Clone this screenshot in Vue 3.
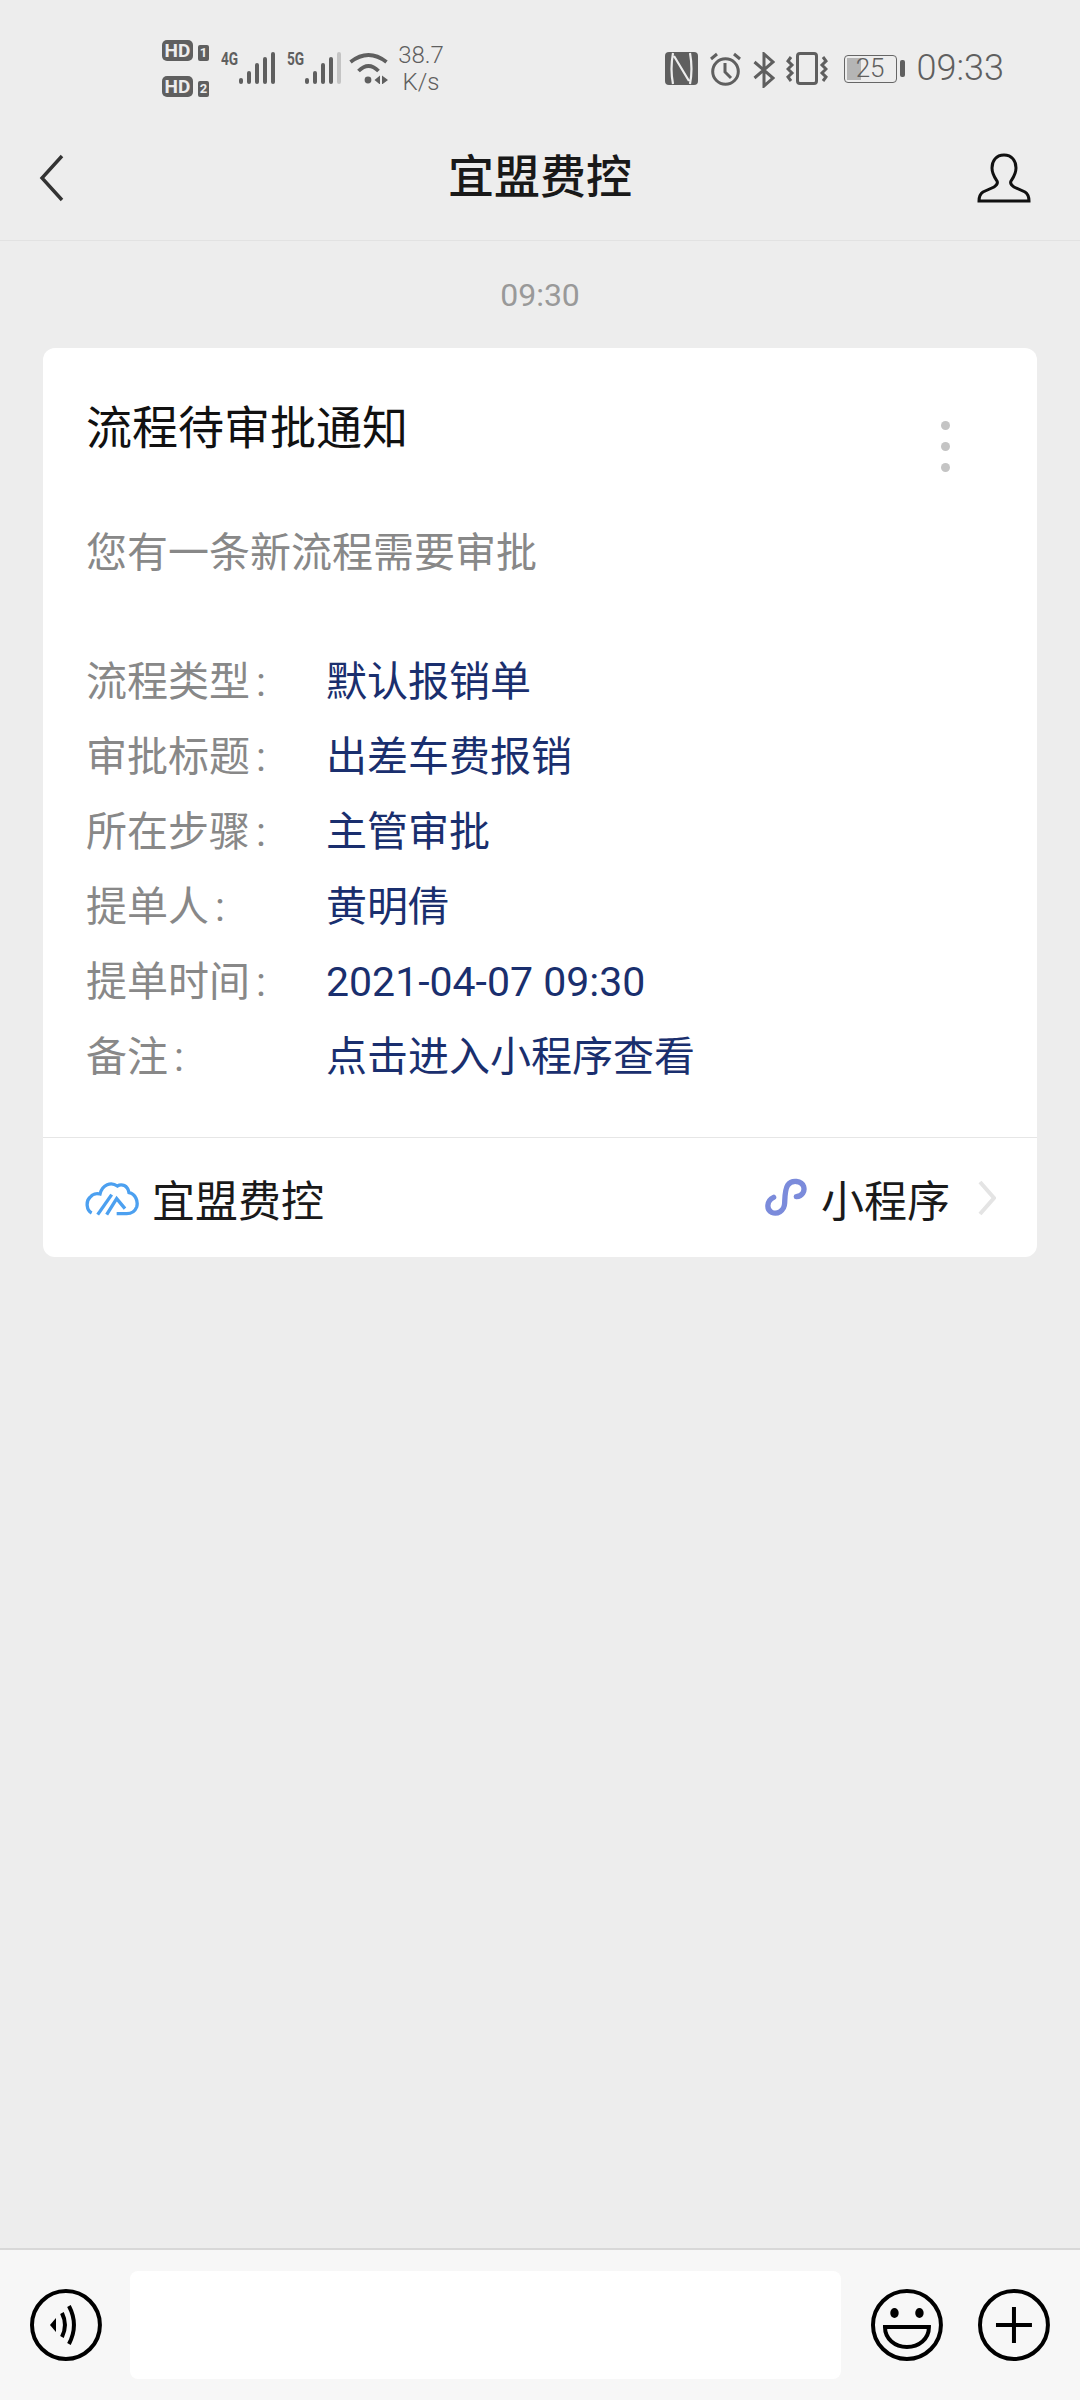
<template>
  <div class="page">
    <!-- status bar -->
    <div class="status">
      <div class="status-left">
        <div class="hd-col">
          <div class="hd-line"><span class="hd">HD</span><span class="sim">1</span></div>
          <div class="hd-line"><span class="hd">HD</span><span class="sim">2</span></div>
        </div>
        <div v-for="(net, n) in networks" :key="net" class="net">
          <span class="net-tag">{{ net }}</span>
          <svg class="bars" width="36" height="33" viewBox="0 0 36 33">
            <rect
              v-for="(b, i) in bars"
              :key="i"
              :x="b.x"
              :y="b.y"
              width="4"
              :height="33 - b.y"
              rx="2"
              :fill="n === 1 && i === 4 ? '#c4c4c4' : '#5f5f5f'"
            />
          </svg>
        </div>
        <svg class="wifi" width="39" height="32" viewBox="0 0 39 32" fill="none" stroke="#5f5f5f" stroke-width="3.8">
          <path d="M1.5 10 Q19.5 -4 37.5 10" />
          <path d="M9.5 19 Q19.5 9 29.5 19" />
          <circle cx="19" cy="28" r="3.4" fill="#5f5f5f" stroke="none" />
          <path d="M31 23.5 L25.5 28 L31 32.5 Z M33 23.5 L39 28 L33 32.5 Z" fill="#5f5f5f" stroke="none" />
        </svg>
        <div class="speed">38.7<br />K/s</div>
      </div>
      <div class="status-right">
        <svg width="33" height="33" viewBox="0 0 33 33">
          <rect width="33" height="33" rx="4" fill="#5f5f5f" />
          <path d="M8 1 C6 12 6 22 8 32 M9 4 L24 29 M25 1 C27 12 27 22 25 32" fill="none" stroke="#ededed" stroke-width="2.2" />
        </svg>
        <svg width="33" height="34" viewBox="0 0 33 34" fill="none" stroke="#5f5f5f" stroke-width="3">
          <circle cx="16.5" cy="19.5" r="12.8" />
          <path d="M16 11 V20 L22 26" />
          <path d="M2 7 L8 2 M31 7 L25 2" />
        </svg>
        <svg width="22" height="36" viewBox="0 0 22 36" fill="none" stroke="#5f5f5f" stroke-width="3">
          <path d="M1.5 10 L20 26 L11 34 V2 L20 10 L1.5 26" />
        </svg>
        <svg width="42" height="33" viewBox="0 0 42 33" fill="none" stroke="#5f5f5f" stroke-width="3">
          <rect x="11.5" y="1.5" width="19" height="30" rx="2.5" />
          <path d="M5 5 L2 9 L6 13 L2 17 L6 21 L2 25 L5 29" />
          <path d="M37 5 L40 9 L36 13 L40 17 L36 21 L40 25 L37 29" />
        </svg>
        <div class="battery-wrap">
          <div class="battery">
            <div class="battery-fill"></div>
            <span class="battery-num">25</span>
          </div>
          <div class="battery-nub"></div>
        </div>
        <span class="clock">09:33</span>
      </div>
    </div>

    <!-- nav -->
    <div class="nav">
      <div class="nav-side">
        <svg width="26" height="48" viewBox="0 0 26 48" fill="none" stroke="#333" stroke-width="3.4">
          <path d="M23 2 L3 24 L23 46" />
        </svg>
      </div>
      <div class="nav-title">宜盟费控</div>
      <div class="nav-side">
        <svg width="54" height="50" viewBox="0 0 54 50" fill="none" stroke="#111" stroke-width="3">
          <path d="M27 2 C35 2 39 8 39 15 C39 21 36 25 34 28 C33 30 34 32 37 34 L48 39 C51 41 52 44 52 48 L2 48 C2 44 3 41 6 39 L17 34 C20 32 21 30 20 28 C18 25 15 21 15 15 C15 8 19 2 27 2 Z" />
        </svg>
      </div>
    </div>

    <!-- messages -->
    <div class="chat">
      <div class="time">09:30</div>
      <div class="card">
        <div class="card-body">
          <div class="card-head">
            <div class="card-title">流程待审批通知</div>
            <div class="dots"><i></i><i></i><i></i></div>
          </div>
          <div class="card-sub">您有一条新流程需要审批</div>
          <div class="rows">
            <div v-for="row in rows" :key="row.label" class="row">
              <div class="label">{{ row.label }}<span class="colon">:</span></div>
              <div class="value">{{ row.value }}</div>
            </div>
          </div>
        </div>
        <div class="card-foot">
          <svg class="cloud" width="55" height="36" viewBox="40 44 165 108" fill="none" stroke="#4ca0f0" stroke-width="10">
            <path d="M60 143 C44 135 42 108 55 96 C62 86 75 83 85 86 C92 58 118 48 137 62 C150 54 168 60 172 82 C192 86 200 108 195 125 C190 138 180 145 165 145 L135 145" />
            <path d="M78 148 L120 88" />
            <path d="M105 148 L135 100 L160 130" />
          </svg>
          <span class="foot-name">宜盟费控</span>
          <svg class="mini" width="44" height="40" viewBox="40 50 132 120" fill="none" stroke="#7b8bdb" stroke-width="16" stroke-linecap="round">
            <path d="M140 106 C158 104 166 90 162 76 C156 58 126 54 114 72 C106 84 106 100 105 125 C104 150 82 160 66 153 C50 146 50 118 72 108" />
          </svg>
          <span class="foot-mini">小程序</span>
          <svg width="18" height="36" viewBox="0 0 18 36" fill="none" stroke="#e4e4e4" stroke-width="4">
            <path d="M2 2 L16 18 L2 34" />
          </svg>
        </div>
      </div>
    </div>

    <!-- input bar -->
    <div class="inputbar">
      <svg width="72" height="74" viewBox="0 0 72 74" fill="none" stroke="#000" stroke-width="4">
        <circle cx="36" cy="37" r="34" />
        <path d="M20 37 L26 30 L26 44 Z" fill="#000" stroke="none" />
        <path d="M32 25 Q38 37 32 49" />
        <path d="M39 18 Q49 37 39 56" />
      </svg>
      <div class="input"></div>
      <svg class="emoji" width="72" height="74" viewBox="0 0 72 74" fill="none" stroke="#000" stroke-width="4">
        <circle cx="36" cy="37" r="34" />
        <ellipse cx="23.5" cy="25" rx="4.2" ry="5" fill="#000" stroke="none" />
        <ellipse cx="48.5" cy="25" rx="4.2" ry="5" fill="#000" stroke="none" />
        <path d="M14 39 H58 C58 51 48 59 36 59 C24 59 14 51 14 39 Z" />
      </svg>
      <svg class="plus" width="72" height="74" viewBox="0 0 72 74" fill="none" stroke="#000" stroke-width="4">
        <circle cx="36" cy="37" r="34" />
        <path d="M36 19 V55 M18 37 H54" />
      </svg>
    </div>
  </div>
</template>

<script setup>
const networks = ['4G', '5G']

const bars = [
  { x: 0, y: 27 },
  { x: 8, y: 20 },
  { x: 16, y: 12 },
  { x: 24, y: 6 },
  { x: 32, y: 1 }
]

const rows = [
  { label: '流程类型', value: '默认报销单' },
  { label: '审批标题', value: '出差车费报销' },
  { label: '所在步骤', value: '主管审批' },
  { label: '提单人', value: '黄明倩' },
  { label: '提单时间', value: '2021-04-07 09:30' },
  { label: '备注', value: '点击进入小程序查看' }
]
</script>

<style scoped>
.page {
  width: 1080px;
  height: 2400px;
  display: flex;
  flex-direction: column;
  background: #ededed;
  font-family: Roboto, "Noto Sans CJK SC", sans-serif;
  overflow: hidden;
}

/* status bar */
.status {
  height: 115px;
  flex: none;
  display: flex;
  justify-content: space-between;
  padding: 40px 76px 0 162px;
  box-sizing: border-box;
  color: #5f5f5f;
}
.status-left {
  display: flex;
  align-items: flex-start;
}
.status-right {
  display: flex;
  align-items: flex-start;
  padding-top: 12px;
  gap: 11px;
}
.hd-col {
  display: flex;
  flex-direction: column;
  gap: 15px;
  width: 59px;
}
.hd-line {
  display: flex;
  align-items: flex-end;
  gap: 5px;
}
.hd {
  width: 31px;
  height: 21px;
  line-height: 21px;
  border-radius: 5px;
  background: #5f5f5f;
  color: #ededed;
  font-size: 19px;
  font-weight: 700;
  text-align: center;
}
.sim {
  width: 11px;
  height: 16px;
  line-height: 16px;
  border-radius: 2px;
  background: #5f5f5f;
  color: #ededed;
  font-size: 13px;
  font-weight: 700;
  text-align: center;
}
.net {
  display: flex;
  align-items: flex-start;
  width: 66px;
  padding-top: 11px;
}
.net-tag {
  width: 18px;
  font-size: 19px;
  line-height: 16px;
  font-weight: 700;
  transform: scaleX(0.72);
  transform-origin: left;
}
.bars {
  flex: none;
}
.wifi {
  margin-top: 12px;
  margin-left: -4px;
}
.speed {
  width: 46px;
  margin-left: 10px;
  font-size: 24px;
  line-height: 27px;
  text-align: center;
  margin-top: 2px;
  font-weight: 300;
}
.battery-wrap {
  display: flex;
  align-items: center;
  gap: 3px;
  margin-left: 5px;
  height: 33px;
}
.battery {
  position: relative;
  width: 53px;
  height: 28px;
  box-sizing: border-box;
  border: 1.5px solid #666;
  border-radius: 4px;
  text-align: center;
  font-size: 26px;
  line-height: 25px;
  font-weight: 300;
}
.battery-fill {
  position: absolute;
  left: 2px;
  top: 2px;
  bottom: 2px;
  width: 14px;
  background: #b5b5b5;
}
.battery-num {
  position: relative;
}
.battery-nub {
  width: 5px;
  height: 17px;
  border-radius: 2px;
  background: #5f5f5f;
}
.clock {
  font-size: 36px;
  line-height: 33px;
  font-weight: 300;
  margin-left: 1px;
  color: #5f5f5f;
}

/* nav */
.nav {
  height: 126px;
  flex: none;
  box-sizing: border-box;
  border-bottom: 1px solid #e2e2e2;
  display: flex;
  align-items: center;
  padding: 0 49px 0 39px;
}
.nav-side {
  width: 54px;
  display: flex;
}
.nav-title {
  flex: 1;
  padding: 0 0 10px 10px;
  text-align: center;
  font-size: 46px;
  font-weight: 500;
  color: #191919;
}

/* chat */
.chat {
  flex: 1;
  padding: 0 43px;
}
.time {
  height: 107px;
  line-height: 109px;
  text-align: center;
  font-size: 32px;
  color: #999;
}
.card {
  background: #fff;
  border-radius: 12px;
}
.card-body {
  padding: 50px 43px 42px 43px;
  border-bottom: 1px solid #e6e6e6;
}
.card-head {
  display: flex;
  justify-content: space-between;
  height: 125px;
}
.card-title {
  font-size: 46px;
  line-height: 60px;
  color: #111;
}
.dots {
  display: flex;
  flex-direction: column;
  gap: 12px;
  margin: 23px 44px 0 0;
}
.dots i {
  width: 9px;
  height: 9px;
  border-radius: 50%;
  background: #c4c4c4;
}
.card-sub {
  font-size: 41px;
  line-height: 60px;
  color: #888;
}
.rows {
  margin-top: 62px;
}
.row {
  display: flex;
  height: 75px;
  line-height: 75px;
  font-size: 41px;
}
.label {
  width: 240px;
  color: #888;
}
.colon {
  margin-left: 6px;
}
.value {
  color: #1a2f6e;
}
.card-foot {
  height: 119px;
  display: flex;
  align-items: center;
  padding: 0 41px 0 42px;
}
.foot-name {
  font-size: 43px;
  color: #1a1a1a;
  margin-left: 12px;
}
.mini {
  margin-left: auto;
}
.foot-mini {
  font-size: 43px;
  color: #1a1a1a;
  margin: 0 28px 0 14px;
}

/* input bar */
.inputbar {
  height: 152px;
  flex: none;
  box-sizing: border-box;
  border-top: 2px solid #d8d8d8;
  background: #f7f7f7;
  display: flex;
  align-items: center;
  padding: 0 30px;
}
.input {
  width: 712px;
  height: 108px;
  margin-left: 28px;
  border-radius: 8px;
  background: #fff;
}
.emoji {
  margin-left: 30px;
}
.plus {
  margin-left: 35px;
}
</style>
